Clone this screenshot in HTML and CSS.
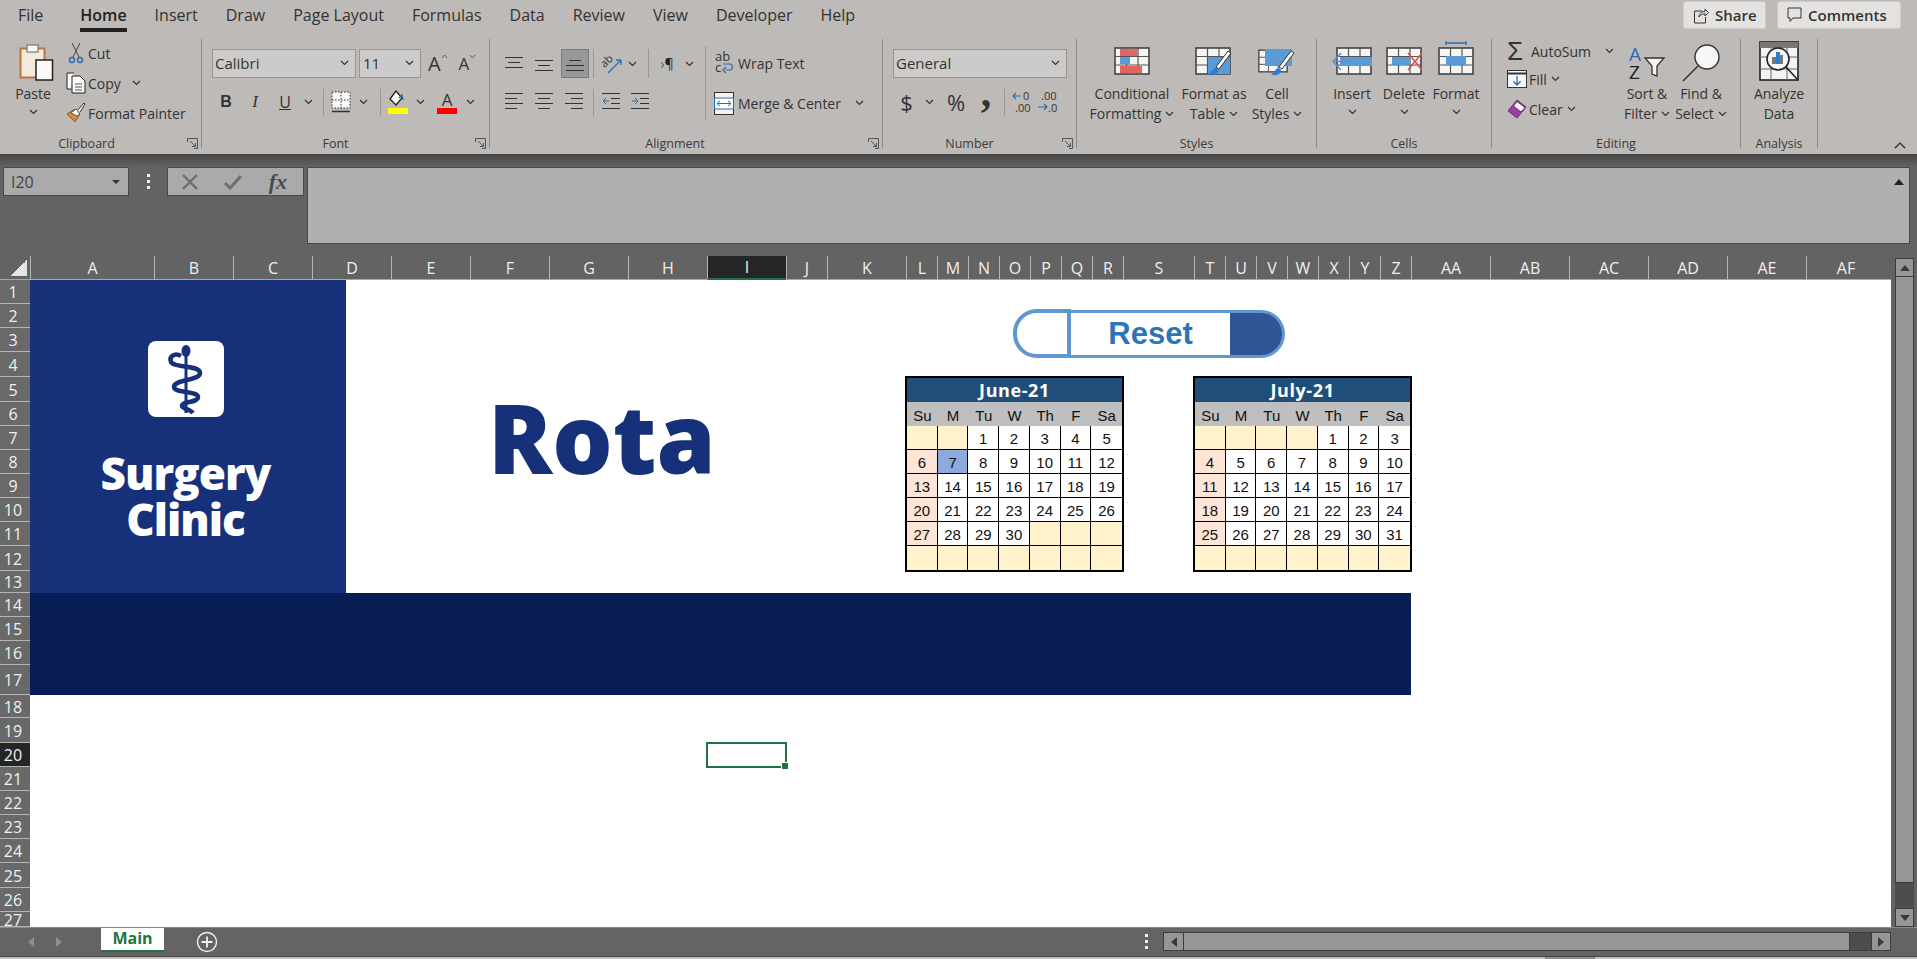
FILE: index.html
```html
<!DOCTYPE html>
<html lang="en">
<head>
  <meta charset="UTF-8">
  <title>Rota - Excel</title>
  <link rel="stylesheet" href="styles.css">
</head>
<body>
  <svg class="defs" aria-hidden="true">
    <symbol id="chev" viewBox="0 0 9 6"><path d="M1 1l3.5 3.5L8 1" fill="none" stroke="#333" stroke-width="1.2"/></symbol>
    <symbol id="launch" viewBox="0 0 11 11"><path d="M.5 4V.5H10.5V10.5H7M3 3l5.5 5.5M8.5 5v3.5H5" fill="none" stroke="#555"/></symbol>
    <symbol id="grid" viewBox="0 0 36 28">
      <rect x="1" y="1" width="34" height="26" fill="#f5f5f5" stroke="#444" stroke-width="1.6"/>
      <path d="M12.5 1v26M24 1v26M1 9.5h34M1 18h34" stroke="#555" stroke-width="1.2"/>
    </symbol>
  </svg>

  <header class="ribbon">
    <nav class="tabs">
      <span class="tab tab-file">File</span>
      <span class="tab tab-active">Home</span>
      <span class="tab">Insert</span>
      <span class="tab">Draw</span>
      <span class="tab">Page Layout</span>
      <span class="tab">Formulas</span>
      <span class="tab">Data</span>
      <span class="tab">Review</span>
      <span class="tab">View</span>
      <span class="tab">Developer</span>
      <span class="tab">Help</span>
      <button class="top-btn top-share">
        <svg width="16" height="17" viewBox="0 0 16 17"><path d="M9 4H1.5v12h11V10M6 10c0-4 3-5.500 6-5.500V2l3.500 3.500L12 9V6.800c-2.500 0-4.500 1-6 3.200z" fill="none" stroke="#333"/></svg>
        Share
      </button>
      <button class="top-btn top-comments">
        <svg width="15" height="16" viewBox="0 0 15 16"><path d="M1 1h13v10H6l-3 3.500V11H1z" fill="none" stroke="#333"/></svg>
        Comments
      </button>
    </nav>

    <div class="groups">
      <section class="group g-clipboard">
        <div class="group-body">
          <div class="big big-paste">
            <svg class="big-icon" width="35" height="38" viewBox="0 0 35 38">
              <rect x="1.500" y="5.500" width="24" height="29" fill="#f3e9dd" stroke="#b9763f" stroke-width="2"/>
              <rect x="8" y="2" width="11" height="7" fill="#f6f6f6" stroke="#666"/>
              <rect x="17" y="17" width="16.500" height="20" fill="#fafafa" stroke="#222" stroke-width="1.500"/>
            </svg>
            <span>Paste</span>
            <svg class="chev chev-big"><use href="#chev"/></svg>
          </div>
          <div class="small-col">
            <div class="tool">
              <svg class="tool-icon" width="20" height="22" viewBox="0 0 20 22"><path d="M6 1l7 14M14 1L7 15" stroke="#444" fill="none"/><circle cx="6" cy="18" r="2.500" fill="none" stroke="#2b6cb0" stroke-width="1.400"/><circle cx="14" cy="18" r="2.500" fill="none" stroke="#2b6cb0" stroke-width="1.400"/></svg>
              Cut
            </div>
            <div class="tool">
              <svg class="tool-icon" width="20" height="22" viewBox="0 0 20 22"><path d="M8 1H1v16h4" fill="#fafafa" stroke="#222"/><path d="M6 4h8l5 5v12H6z" fill="#fafafa" stroke="#222"/><path d="M9 12h7M9 15h7M9 18h7" stroke="#555"/></svg>
              Copy
              <svg class="chev chev-copy"><use href="#chev"/></svg>
            </div>
            <div class="tool">
              <svg class="tool-icon" width="20" height="22" viewBox="0 0 20 22"><path d="M1 12l8 8 5-8-5-5z" fill="#d98a3f" stroke="#8a5a2b"/><path d="M5 11l5-4 4 5-3 2z" fill="#fff" stroke="#555"/><path d="M12 8l6-7 1 1-5 8" fill="#fff" stroke="#333"/></svg>
              Format Painter
            </div>
          </div>
        </div>
        <div class="group-label">Clipboard<svg class="launch"><use href="#launch"/></svg></div>
      </section>

      <section class="group g-font">
        <div class="group-body rows">
          <div class="row">
            <div class="select select-font">Calibri<svg class="chev"><use href="#chev"/></svg></div>
            <div class="select select-size">11<svg class="chev"><use href="#chev"/></svg></div>
            <span class="grow grow-up">A<svg width="7" height="5" viewBox="0 0 7 5"><path d="M1 4l2.500-3L6 4" fill="none" stroke="#2b6cb0"/></svg></span>
            <span class="grow grow-down">A<svg width="7" height="5" viewBox="0 0 7 5"><path d="M1 1l2.500 3L6 1" fill="none" stroke="#2b6cb0"/></svg></span>
          </div>
          <div class="row">
            <span class="fmt w28 fmt-b">B</span>
            <span class="fmt w30 fmt-i">I</span>
            <span class="fmt w30 fmt-u">U</span>
            <span class="fmt w16"><svg class="chev"><use href="#chev"/></svg></span>
            <span class="sep w15"></span>
            <span class="fmt w20"><svg width="20" height="22" viewBox="0 0 20 22"><path d="M1 1h18v16H1zM10 1v16M1 9h18" fill="#fafafa" stroke="#333" stroke-dasharray="1.500 1.500"/><path d="M1 20.500h18" stroke="#333" stroke-width="1.500"/></svg></span>
            <span class="fmt w25"><svg class="chev"><use href="#chev"/></svg></span>
            <span class="sep w9"></span>
            <span class="fmt w26"><svg width="20" height="24" viewBox="0 0 20 24"><path d="M8 1l-6 8 6 6 6-7z" fill="#fafafa" stroke="#222" stroke-width="1.300"/><path d="M11 8l3-3 1 5" fill="none" stroke="#2b6cb0" stroke-width="1.300"/><rect y="18" width="20" height="6" fill="#ffff00"/></svg></span>
            <span class="fmt w18"><svg class="chev"><use href="#chev"/></svg></span>
            <span class="fmt w36 font-color">A<i class="color-bar"></i></span>
            <span class="fmt w10"><svg class="chev"><use href="#chev"/></svg></span>
          </div>
        </div>
        <div class="group-label group-label-font">Font<svg class="launch"><use href="#launch"/></svg></div>
      </section>

      <section class="group g-align">
        <div class="group-body align-body">
          <div class="rows align-left">
            <div class="row">
              <span class="fmt w30"><svg width="18" height="14" viewBox="0 0 18 14"><path d="M0 .5h18M3 5.500h12M0 10.500h18" stroke="#333"/></svg></span>
              <span class="fmt w30"><svg width="18" height="14" viewBox="0 0 18 14"><path d="M0 3.500h18M3 8.500h12M0 13.500h18" stroke="#333"/></svg></span>
              <span class="fmt fmt-on"><svg width="18" height="14" viewBox="0 0 18 14"><path d="M3 3.500h12M0 8.500h18M0 13.500h18" stroke="#333"/></svg></span>
              <span class="sep w8"></span>
              <span class="fmt w30"><svg width="21" height="20" viewBox="0 0 21 20"><text x="0" y="12" class="svg-num" transform="rotate(-45 4 10)">ab</text><path d="M6 19L19 6M19 6h-5M19 6v5" fill="none" stroke="#2b6cb0" stroke-width="1.300"/></svg></span>
              <span class="fmt w10"><svg class="chev"><use href="#chev"/></svg></span>
              <span class="sep w22"></span>
              <span class="fmt w16 rtl-mark"><b>&rsaquo;</b>&para;</span>
              <span class="fmt w28"><svg class="chev"><use href="#chev"/></svg></span>
            </div>
            <div class="row">
              <span class="fmt w30"><svg width="18" height="20" viewBox="0 0 18 20"><path d="M0 1.500h18M0 6.500h12M0 11.500h18M0 16.500h12" stroke="#333"/></svg></span>
              <span class="fmt w30"><svg width="18" height="20" viewBox="0 0 18 20"><path d="M0 1.500h18M3 6.500h12M0 11.500h18M3 16.500h12" stroke="#333"/></svg></span>
              <span class="fmt w30"><svg width="18" height="20" viewBox="0 0 18 20"><path d="M0 1.500h18M6 6.500h12M0 11.500h18M6 16.500h12" stroke="#333"/></svg></span>
              <span class="sep w8"></span>
              <span class="fmt w28"><svg width="18" height="20" viewBox="0 0 18 20"><path d="M0 1.500h18M9 6.500h9M9 11.500h9M0 16.500h18" stroke="#333"/><path d="M7 9H1M4 6L1 9l3 3" fill="none" stroke="#2b6cb0"/></svg></span>
              <span class="fmt w30"><svg width="18" height="20" viewBox="0 0 18 20"><path d="M0 1.500h18M9 6.500h9M9 11.500h9M0 16.500h18" stroke="#333"/><path d="M1 9h6M4 6l3 3-3 3" fill="none" stroke="#2b6cb0"/></svg></span>
            </div>
          </div>
          <span class="sep sep-tall"></span>
          <div class="align-right">
            <div class="tool tool-wrap">
              <svg width="19" height="24" viewBox="0 0 19 24"><text x="0" y="10" class="svg-txt">ab</text><text x="0" y="21" class="svg-txt">c</text><path d="M11 19h4c3 0 3-6 0-6H8M11 16l-3 3 3 3" fill="none" stroke="#2b6cb0" stroke-width="1.200"/></svg>
              Wrap Text
            </div>
            <div class="tool tool-merge">
              <svg width="20" height="23" viewBox="0 0 20 23"><rect x=".5" y=".5" width="19" height="22" fill="#f3f3f3" stroke="#333"/><rect x=".5" y="6" width="19" height="11" fill="#fff" stroke="#2b6cb0"/><path d="M3 11.500h14M6 9l-3 2.500L6 14M14 9l3 2.500L14 14" fill="none" stroke="#2b6cb0"/></svg>
              Merge &amp; Center
              <svg class="chev chev-merge"><use href="#chev"/></svg>
            </div>
          </div>
        </div>
        <div class="group-label group-label-align">Alignment<svg class="launch"><use href="#launch"/></svg></div>
      </section>

      <section class="group g-number">
        <div class="group-body rows">
          <div class="row">
            <div class="select select-general">General<svg class="chev"><use href="#chev"/></svg></div>
          </div>
          <div class="row">
            <span class="fmt w27 fmt-sym">$</span>
            <span class="fmt w18"><svg class="chev"><use href="#chev"/></svg></span>
            <span class="fmt w36 fmt-sym">%</span>
            <span class="fmt w24 fmt-comma">,</span>
            <span class="sep w12"></span>
            <span class="fmt w24"><svg width="20" height="22" viewBox="0 0 20 22"><text x="11" y="9" class="svg-num">0</text><text x="3" y="21" class="svg-num">.00</text><path d="M9 5H1M4 2L1 5l3 3" fill="none" stroke="#2b6cb0" stroke-width="1.200"/></svg></span>
            <span class="fmt w28"><svg width="20" height="22" viewBox="0 0 20 22"><text x="3" y="9" class="svg-num">.00</text><text x="10" y="21" class="svg-num">.0</text><path d="M0 16h9M6 13l3 3-3 3" fill="none" stroke="#2b6cb0" stroke-width="1.200"/></svg></span>
          </div>
        </div>
        <div class="group-label group-label-font">Number<svg class="launch"><use href="#launch"/></svg></div>
      </section>

      <section class="group g-styles">
        <div class="group-body">
          <div class="big w92">
            <svg class="big-icon" width="36" height="28"><use href="#grid"/><rect x="6" y="2" width="17" height="7" fill="#e06666"/><rect x="6" y="10" width="10" height="7" fill="#5b9bd5"/><rect x="6" y="19" width="22" height="7" fill="#e06666"/></svg>
            <span>Conditional</span>
            <span>Formatting<svg class="chev chev-in"><use href="#chev"/></svg></span>
          </div>
          <div class="big w68">
            <svg class="big-icon" width="38" height="31" viewBox="0 0 38 31"><use href="#grid" width="36" height="28"/><rect x="13" y="10" width="22" height="17" fill="#5b9bd5"/><path d="M36 6L24 22l-3-2L33 4z" fill="#fff" stroke="#333"/><path d="M21 21c-3 0-4 4-8 6 5 3 10 0 10-4z" fill="#2b7cd3"/></svg>
            <span>Format as</span>
            <span>Table<svg class="chev chev-in"><use href="#chev"/></svg></span>
          </div>
          <div class="big w58">
            <svg class="big-icon" width="38" height="31" viewBox="0 0 38 31"><use href="#grid" width="30" height="28"/><rect x="7" y="2" width="27" height="17" fill="#5b9bd5"/><path d="M36 6L24 22l-3-2L33 4z" fill="#fff" stroke="#333"/><path d="M21 21c-3 0-4 4-8 6 5 3 10 0 10-4z" fill="#2b7cd3"/></svg>
            <span>Cell</span>
            <span>Styles<svg class="chev chev-in"><use href="#chev"/></svg></span>
          </div>
        </div>
        <div class="group-label">Styles</div>
      </section>

      <section class="group g-cells">
        <div class="group-body">
          <div class="big w54">
            <svg class="big-icon" width="40" height="28" viewBox="0 0 40 28"><use href="#grid" x="4" width="36" height="28"/><rect x="8" y="10" width="32" height="9" fill="#5b9bd5"/><path d="M17 14.500H2M9 6l-8 8.500L9 23" fill="none" stroke="#5b8fd0" stroke-width="1.600"/></svg>
            <span>Insert</span>
            <svg class="chev chev-big"><use href="#chev"/></svg>
          </div>
          <div class="big w50">
            <svg class="big-icon" width="36" height="28"><use href="#grid"/><rect x="6" y="10" width="18" height="8" fill="#5b9bd5"/><path d="M22 6l14 17M36 6L22 23" stroke="#d9534f" stroke-width="1.600"/></svg>
            <span>Delete</span>
            <svg class="chev chev-big"><use href="#chev"/></svg>
          </div>
          <div class="big w54">
            <svg class="big-icon icon-tall" width="36" height="34" viewBox="0 0 36 34"><use href="#grid" y="6" width="36" height="28"/><rect x="8" y="15" width="20" height="9" fill="#5b9bd5"/><path d="M8 2h20M8 0v4M28 0v4" stroke="#2b6cb0" stroke-width="1.300"/></svg>
            <span>Format</span>
            <svg class="chev chev-big"><use href="#chev"/></svg>
          </div>
        </div>
        <div class="group-label">Cells</div>
      </section>

      <section class="group g-editing">
        <div class="group-body">
          <div class="small-col edit-col">
            <div class="tool tool-sum"><span class="sigma">&Sigma;</span>AutoSum<svg class="chev chev-sum"><use href="#chev"/></svg></div>
            <div class="tool tool-edit">
              <svg class="tool-icon" width="20" height="18" viewBox="0 0 20 18"><rect x=".5" y=".5" width="19" height="17" fill="#f6f6f6" stroke="#333"/><path d="M.5 3.500h19" stroke="#333" stroke-width="2"/><path d="M10 6v9M6.500 11.500L10 15l3.500-3.500" fill="none" stroke="#2b6cb0" stroke-width="1.300"/></svg>
              Fill<svg class="chev chev-in"><use href="#chev"/></svg>
            </div>
            <div class="tool tool-edit">
              <svg class="tool-icon" width="20" height="20" viewBox="0 0 20 20"><path d="M1 12L10 1l9 7-9 11z" fill="#9c3fa0" stroke="#6d2a71"/><path d="M6.500 7L10 2.500l8 6L14 13z" fill="#fafafa" stroke="#6d2a71"/></svg>
              Clear<svg class="chev chev-in"><use href="#chev"/></svg>
            </div>
          </div>
          <div class="big w54">
            <svg class="big-icon icon-sort" width="38" height="36" viewBox="0 0 38 36"><text x="1" y="17" class="svg-az svg-az-a">A</text><text x="1" y="35" class="svg-az">Z</text><path d="M17 14h19l-7 8v10l-5-2v-8z" fill="#f4f4f4" stroke="#333" stroke-width="1.300"/></svg>
            <span>Sort &amp;</span>
            <span>Filter<svg class="chev chev-in"><use href="#chev"/></svg></span>
          </div>
          <div class="big w54">
            <svg class="big-icon icon-sort" width="38" height="38" viewBox="0 0 38 38"><circle cx="25" cy="13" r="12" fill="#f7f7f7" stroke="#333" stroke-width="1.400"/><path d="M16 22L1 37" stroke="#333" stroke-width="1.400"/></svg>
            <span>Find &amp;</span>
            <span>Select<svg class="chev chev-in"><use href="#chev"/></svg></span>
          </div>
        </div>
        <div class="group-label group-label-edit">Editing</div>
      </section>

      <section class="group g-analysis">
        <div class="group-body">
          <div class="big big-analyze">
            <svg class="big-icon icon-tall" width="41" height="40" viewBox="0 0 41 40">
              <rect x="1" y="1" width="38" height="38" fill="#f3f3f3" stroke="#222" stroke-width="1.600"/>
              <rect x="1" y="1" width="38" height="6" fill="#777"/>
              <path d="M1 16h38M1 28h38M12 7v32M28 7v32" stroke="#666"/>
              <circle cx="19" cy="18" r="11" fill="#f7f7f7" stroke="#222" stroke-width="1.600"/>
              <path d="M27 26l12 13" stroke="#222" stroke-width="1.600"/>
              <rect x="13" y="16" width="4" height="7" fill="#777"/><rect x="17" y="11" width="4" height="12" fill="#2b7cd3"/><rect x="21" y="14" width="3" height="9" fill="#777"/>
            </svg>
            <span>Analyze</span>
            <span>Data</span>
          </div>
        </div>
        <div class="group-label">Analysis</div>
      </section>
    </div>
    <svg class="collapse" width="12" height="7" viewBox="0 0 12 7"><path d="M1 6l5-5 5 5" fill="none" stroke="#222" stroke-width="1.200"/></svg>
  </header>

  <div class="formula-bar">
    <div class="name-box">I20<i class="caret-down"></i></div>
    <div class="dots"><i></i><i></i><i></i></div>
    <div class="fx-box">
      <svg width="16" height="16" viewBox="0 0 16 16"><path d="M1 1l14 14M15 1L1 15" stroke="#6e6e6e" stroke-width="2.400"/></svg>
      <svg width="18" height="16" viewBox="0 0 18 16"><path d="M1 9l5 5L17 2" fill="none" stroke="#6e6e6e" stroke-width="3"/></svg>
      <span class="fx">fx</span>
    </div>
    <div class="formula-input"><svg width="10" height="7" viewBox="0 0 10 7"><path d="M0 7l5-6 5 6z" fill="#222"/></svg></div>
  </div>

  <main class="workspace">
    <div class="sheet">
      <div class="corner"><i></i></div>
      <div class="col-h">A</div><div class="col-h">B</div><div class="col-h">C</div><div class="col-h">D</div><div class="col-h">E</div><div class="col-h">F</div><div class="col-h">G</div><div class="col-h">H</div><div class="col-h col-active">I</div><div class="col-h">J</div><div class="col-h">K</div><div class="col-h">L</div><div class="col-h">M</div><div class="col-h">N</div><div class="col-h">O</div><div class="col-h">P</div><div class="col-h">Q</div><div class="col-h">R</div><div class="col-h">S</div><div class="col-h">T</div><div class="col-h">U</div><div class="col-h">V</div><div class="col-h">W</div><div class="col-h">X</div><div class="col-h">Y</div><div class="col-h">Z</div><div class="col-h">AA</div><div class="col-h">AB</div><div class="col-h">AC</div><div class="col-h">AD</div><div class="col-h">AE</div><div class="col-h">AF</div><div class="col-h col-end"></div>

      <div class="row-h">1</div><div class="row-h">2</div><div class="row-h">3</div><div class="row-h">4</div><div class="row-h">5</div><div class="row-h">6</div><div class="row-h">7</div><div class="row-h">8</div><div class="row-h">9</div><div class="row-h">10</div><div class="row-h">11</div><div class="row-h">12</div><div class="row-h">13</div><div class="row-h">14</div><div class="row-h">15</div><div class="row-h">16</div><div class="row-h">17</div><div class="row-h">18</div><div class="row-h">19</div><div class="row-h row-active">20</div><div class="row-h">21</div><div class="row-h">22</div><div class="row-h">23</div><div class="row-h">24</div><div class="row-h">25</div><div class="row-h">26</div><div class="row-h">27</div>

      <div class="logo-block">
        <svg class="logo-mark" width="76" height="76" viewBox="0 0 76 76">
          <rect width="76" height="76" rx="8" fill="#fff"/>
          <path d="M38 14v58" stroke="#16317a" stroke-width="3"/>
          <ellipse cx="38" cy="10" rx="4.500" ry="6" fill="#16317a"/>
          <path d="M33 15C26 11 21 16 23 21 26 27 52 24 52 32 52 40 26 38 26 46 26 52 50 50 50 56 50 62 34 60 34 65 34 68 42 68 45 72" fill="none" stroke="#16317a" stroke-width="4.500"/>
        </svg>
        <div class="logo-text">Surgery<br>Clinic</div>
      </div>

      <h1 class="rota-title">Rota</h1>

      <div class="reset-btn">
        <span class="reset-left"></span>
        <span class="reset-mid">Reset</span>
        <span class="reset-right"></span>
      </div>

      <table class="cal cal-june">
        <tr><th colspan="7" class="cal-title">June-21</th></tr>
        <tr class="cal-days"><td>Su</td><td>M</td><td>Tu</td><td>W</td><td>Th</td><td>F</td><td>Sa</td></tr>
        <tr><td class="blank"></td><td class="blank"></td><td>1</td><td>2</td><td>3</td><td>4</td><td>5</td></tr>
        <tr><td class="sun">6</td><td class="today">7</td><td>8</td><td>9</td><td>10</td><td>11</td><td>12</td></tr>
        <tr><td class="sun">13</td><td>14</td><td>15</td><td>16</td><td>17</td><td>18</td><td>19</td></tr>
        <tr><td class="sun">20</td><td>21</td><td>22</td><td>23</td><td>24</td><td>25</td><td>26</td></tr>
        <tr><td class="sun">27</td><td>28</td><td>29</td><td>30</td><td class="blank"></td><td class="blank"></td><td class="blank"></td></tr>
        <tr><td class="blank"></td><td class="blank"></td><td class="blank"></td><td class="blank"></td><td class="blank"></td><td class="blank"></td><td class="blank"></td></tr>
      </table>

      <table class="cal cal-july">
        <tr><th colspan="7" class="cal-title">July-21</th></tr>
        <tr class="cal-days"><td>Su</td><td>M</td><td>Tu</td><td>W</td><td>Th</td><td>F</td><td>Sa</td></tr>
        <tr><td class="blank"></td><td class="blank"></td><td class="blank"></td><td class="blank"></td><td>1</td><td>2</td><td>3</td></tr>
        <tr><td class="sun">4</td><td>5</td><td>6</td><td>7</td><td>8</td><td>9</td><td>10</td></tr>
        <tr><td class="sun">11</td><td>12</td><td>13</td><td>14</td><td>15</td><td>16</td><td>17</td></tr>
        <tr><td class="sun">18</td><td>19</td><td>20</td><td>21</td><td>22</td><td>23</td><td>24</td></tr>
        <tr><td class="sun">25</td><td>26</td><td>27</td><td>28</td><td>29</td><td>30</td><td>31</td></tr>
        <tr><td class="blank"></td><td class="blank"></td><td class="blank"></td><td class="blank"></td><td class="blank"></td><td class="blank"></td><td class="blank"></td></tr>
      </table>

      <div class="band"></div>
      <div class="selected-cell"></div>
    </div>

    <aside class="vscroll">
      <div class="sb-btn sb-up"><i class="tri-up"></i></div>
      <div class="sb-thumb"></div>
      <div class="sb-track"></div>
      <div class="sb-btn sb-down"><i class="tri-down"></i></div>
    </aside>
  </main>

  <footer class="tabbar">
    <i class="tri-left tab-prev"></i>
    <i class="tri-right tab-next"></i>
    <div class="sheet-tab">Main</div>
    <svg class="add-sheet" width="22" height="22" viewBox="0 0 22 22"><circle cx="11" cy="11" r="9.500" fill="none" stroke="#f2f2f2" stroke-width="1.400"/><path d="M11 5.500v11M5.500 11h11" stroke="#f2f2f2" stroke-width="1.800"/></svg>
    <div class="dots dots-tab"><i></i><i></i><i></i></div>
    <div class="hscroll">
      <div class="hs-btn"><i class="tri-left"></i></div>
      <div class="hs-thumb"></div>
      <div class="hs-track"></div>
      <div class="hs-btn hs-btn-right"><i class="tri-right"></i></div>
    </div>
  </footer>
  <div class="statusbar"><i></i></div>
</body>
</html>
```

FILE: styles.css
```css
* {
  box-sizing: border-box;
  margin: 0;
  padding: 0;
}
html, body {
  width: 1917px;
  height: 959px;
  overflow: hidden;
}
body {
  font-family: 'Open Sans', 'Noto Sans', sans-serif;
  font-size: 14px;
  color: #333;
  background: #636363;
  display: flex;
  flex-direction: column;
}
i {
  display: block;
}
.defs {
  position: absolute;
  width: 0;
  height: 0;
}

/* Ribbon */
.ribbon {
  position: relative;
  height: 154px;
  flex: none;
  background: #bebab7;
}
.tabs {
  height: 39px;
  display: flex;
  align-items: flex-start;
  gap: 28px;
  padding-left: 18px;
  font-size: 16px;
}
.tab {
  height: 32px;
  line-height: 30px;
  white-space: nowrap;
}
.tab-file {
  margin-right: 9px;
}
.tab-active {
  font-weight: 600;
  color: #222;
  border-bottom: 4px solid #222;
}
.top-btn {
  height: 28px;
  margin-top: 1px;
  display: flex;
  align-items: center;
  gap: 6px;
  font: 600 15px 'Open Sans', sans-serif;
  color: #333;
  background: #e4e2e0;
  border: 1px solid #cfccc9;
  border-radius: 3px;
  padding-left: 9px;
}
.top-share {
  margin-left: auto;
  width: 83px;
  margin-right: -17px;
}
.top-comments {
  width: 124px;
  margin-right: 16px;
}
.groups {
  display: flex;
}
.group {
  height: 109px;
  border-right: 1px solid #8e8b88;
  display: flex;
  flex-direction: column;
  flex: none;
}
.group-body {
  height: 97px;
  flex: none;
  display: flex;
}
.group-label {
  position: relative;
  height: 12px;
  line-height: 16px;
  font-size: 12.5px;
  text-align: center;
  color: #3a3a3a;
}
.launch {
  position: absolute;
  right: 3px;
  top: 2px;
  width: 11px;
  height: 11px;
}
.g-clipboard { width: 202px; }
.g-clipboard .group-label { padding-right: 28px; }
.g-font { width: 288px; }
.g-font .group-body { padding-left: 10px; }
.group-label-font { padding-right: 20px; }
.g-align { width: 393px; }
.group-label-align { padding-right: 22px; }
.g-number { width: 194px; }
.g-number .group-body { padding-left: 10px; }
.g-styles { width: 240px; }
.g-styles .group-body { padding-left: 9px; }
.g-cells { width: 175px; }
.g-cells .group-body { padding-left: 8px; }
.g-editing { width: 249px; }
.g-analysis { width: 77px; }

/* big buttons: icon on top, two lines of label underneath */
.big {
  height: 85px;
  display: grid;
  grid-template-rows: 45px 20px 20px;
  justify-items: center;
  line-height: 20px;
  white-space: nowrap;
  flex: none;
}
.big-icon {
  margin-top: 8px;
}
.icon-tall {
  margin-top: 2px;
}
.icon-sort {
  margin-top: 5px;
}
.big-paste { width: 66px; }
.big-paste .big-icon {
  margin: 4px 0 0 6px;
}
.big-analyze { width: 76px; }
.w92 { width: 92px; margin-right: 2px; }
.w68 { width: 68px; }
.w58 { width: 58px; }
.w54 { width: 54px; }
.w50 { width: 50px; }
.chev {
  width: 9px;
  height: 6px;
  flex: none;
}
.chev-big {
  align-self: center;
  margin-bottom: 4px;
}
.chev-in {
  margin-left: 4px;
  vertical-align: 2px;
}

/* small icon + label rows */
.small-col {
  display: flex;
  flex-direction: column;
  width: 136px;
  margin-top: -1px;
}
.tool {
  height: 30px;
  display: flex;
  align-items: center;
  white-space: nowrap;
}
.tool-icon {
  width: 20px;
  margin-right: 2px;
  flex: none;
}
.chev-copy { margin-left: 11px; }

.rows {
  display: flex;
  flex-direction: column;
  gap: 12px;
  padding-top: 10px;
}
.row {
  display: flex;
  align-items: center;
}
.row + .row {
  height: 24px;
}
.select {
  height: 29px;
  display: flex;
  align-items: center;
  justify-content: space-between;
  padding: 0 6px 2px 2px;
  background: #cdcbc9;
  border: 1px solid #979593;
  font-size: 15px;
  flex: none;
}
.select-font { width: 144px; margin-right: 3px; }
.select-size { width: 62px; margin-right: 7px; padding-left: 3px; }
.select-general { width: 174px; }
.grow {
  display: flex;
  font-size: 20px;
  line-height: 24px;
  width: 32px;
  color: #333;
}
.grow svg { margin-top: 2px; }
.grow-down {
  font-size: 17px;
}
.fmt {
  height: 24px;
  display: flex;
  align-items: center;
  justify-content: center;
  flex: none;
}
.fmt-on {
  width: 28px;
  height: 29px;
  margin-left: 2px;
  background: #989898;
  border: 1px solid #7a7a7a;
}
.fmt-b { font-weight: 700; font-size: 16px; font-family: 'Liberation Sans', sans-serif; }
.fmt-i { font-style: italic; font-size: 17px; font-family: 'Liberation Serif', serif; }
.fmt-u { text-decoration: underline; font-size: 16px; }
.fmt-sym { font-size: 22px; }
.fmt-comma { font: 700 42px/24px 'Liberation Serif', serif; padding-bottom: 20px; }
.font-color {
  flex-direction: column;
  font-size: 17px;
  line-height: 17px;
}
.color-bar {
  width: 20px;
  height: 6px;
  background: #f00;
}
.rtl-mark { font-size: 14px; color: #222; }
.rtl-mark b { color: #2b6cb0; font-weight: 400; }
.w8 { width: 8px; }
.w9 { width: 9px; }
.w10 { width: 10px; }
.w12 { width: 12px; }
.w15 { width: 15px; }
.w16 { width: 16px; }
.w18 { width: 18px; }
.w20 { width: 20px; }
.w22 { width: 22px; }
.w24 { width: 24px; }
.w25 { width: 25px; }
.w26 { width: 26px; }
.w27 { width: 27px; }
.w28 { width: 28px; }
.w30 { width: 30px; }
.w36 { width: 36px; }
.sep {
  height: 29px;
  flex: none;
}
.sep::before {
  content: "";
  display: block;
  width: 1px;
  height: 100%;
  margin: 0 auto;
  background: #9a9794;
}
.row + .row .sep {
  height: 27px;
}
.align-body { padding-left: 9px; }
.align-left { width: 206px; }
.sep-tall {
  height: 74px;
  width: 1px;
  margin-top: 7px;
  background: #9a9794;
}
.sep-tall::before { display: none; }
.align-right {
  padding-top: 9px;
  padding-left: 9px;
}
.tool-wrap { height: 30px; gap: 4px; }
.tool-merge { height: 30px; margin-top: 10px; gap: 4px; margin-left: -1px; }
.chev-merge { margin-left: 10px; }
.svg-txt {
  font: 13px 'Open Sans', sans-serif;
  fill: #333;
}
.svg-num {
  font: 11px 'Open Sans', sans-serif;
  fill: #333;
}
.svg-az {
  font: 19px 'Open Sans', sans-serif;
  fill: #222;
}
.svg-az-a { fill: #2b6cb0; }
.edit-col {
  width: 113px;
  margin-left: 15px;
}
.edit-col .tool:first-child { height: 26px; }
.sigma {
  width: 24px;
  font: 26px 'Liberation Sans', sans-serif;
  flex: none;
}
.chev-sum { margin-left: 14px; }
.collapse {
  position: absolute;
  right: 11px;
  bottom: 5px;
}

/* Formula bar */
.formula-bar {
  height: 102px;
  flex: none;
  display: flex;
  align-items: flex-start;
  padding-top: 13px;
  background: linear-gradient(#464646, #636363 13px);
}
.name-box {
  width: 126px;
  height: 29px;
  margin-left: 3px;
  padding: 0 8px 0 7px;
  font-size: 16px;
  color: #444;
  background: #aaa;
  border: 1px solid #484848;
  display: flex;
  justify-content: space-between;
  align-items: center;
}
.caret-down {
  border: 4px solid transparent;
  border-top: 4px solid #333;
  border-bottom: 0;
}
.dots {
  display: flex;
  flex-direction: column;
  gap: 3px;
  width: 38px;
  height: 29px;
  justify-content: center;
  align-items: center;
}
.dots i {
  width: 3px;
  height: 3px;
  background: #f0f0f0;
}
.fx-box {
  width: 137px;
  height: 29px;
  background: #aaa;
  border: 1px solid #484848;
  display: flex;
  align-items: center;
  justify-content: space-between;
  padding: 0 16px 0 14px;
  margin-right: 3px;
}
.fx {
  font: italic 700 22px 'Liberation Serif', serif;
  color: #4a4a4a;
}
.formula-input {
  width: 1603px;
  height: 77px;
  background: #b0b0b0;
  border: 1px solid #484848;
  display: flex;
  justify-content: flex-end;
  padding: 10px 5px 0 0;
}

/* Sheet */
.workspace {
  height: 671px;
  flex: none;
  display: flex;
}
.sheet {
  width: 1891px;
  display: grid;
  grid-template-columns: 30px 124px repeat(8, 79px) 41px 79px repeat(7, 31px) 71px repeat(7, 31px) repeat(6, 79px) 6px;
  grid-template-rows: 24px 24px 24px 24px 25px 25px 24px 24px 24px 24px 24px 24px 25px 22px 24px 24px 24px 30px 23px 25px 24px 24px 24px 24px 24px 25px 24px 15px;
  background: #fff;
  overflow: hidden;
}
.corner {
  background: #636363;
  border-bottom: 1px solid #a8a8a8;
  padding: 4px 0 0 11px;
}
.corner i {
  width: 16px;
  height: 16px;
  background: linear-gradient(135deg, transparent 50%, #e4e4e4 50%);
}
.col-h,
.row-h {
  background: #636363;
  color: #f0f0f0;
  font-size: 16px;
  display: flex;
  align-items: center;
  justify-content: center;
  overflow: hidden;
}
.col-h {
  border-left: 1px solid #b4b4b4;
  border-bottom: 1px solid #a8a8a8;
}
.col-end {
  border-left: 0;
}
.col-active {
  background: #262626;
  border-bottom: 2px solid #217346;
}
.row-h {
  grid-column: 1;
  background: #696969;
  border-bottom: 1px solid #b4b4b4;
  padding: 1px 4px 0 0;
}
.row-active {
  background: #262626;
}

.logo-block {
  grid-column: 2 / 6;
  grid-row: 2 / 15;
  width: 316px;
  background: #16317a;
  display: flex;
  flex-direction: column;
  align-items: center;
  padding: 61px 5px 0 0;
}
.logo-text {
  margin-top: 33px;
  color: #fff;
  font: 800 44px/46px 'Open Sans', sans-serif;
  letter-spacing: -1px;
  text-align: center;
}
.rota-title {
  grid-column: 7 / 11;
  grid-row: 2 / 15;
  padding: 92px 0 0 18px;
  color: #16317a;
  font: 800 95px/130px 'Open Sans', sans-serif;
}
.reset-btn {
  grid-column: 13 / 27;
  grid-row: 3 / 6;
  margin: 6px 0 0 107px;
  width: 272px;
  height: 48px;
  display: flex;
}
.reset-left {
  width: 58px;
  height: 49px;
  margin-top: -1px;
  border: 4px solid #6097cf;
  border-radius: 24px 0 0 24px;
}
.reset-mid {
  flex: 1;
  border: solid #6097cf;
  border-width: 3px 0;
  color: #2e75b6;
  font: 700 31px/42px 'Liberation Sans', sans-serif;
  text-align: center;
}
.reset-right {
  width: 55px;
  background: #2f5597;
  border: 3px solid #6097cf;
  border-left: 0;
  border-radius: 0 24px 24px 0;
}

/* Mini calendars */
.cal {
  grid-row: 6 / 15;
  align-self: start;
  margin: -1px 0 0 -1px;
  width: 219px;
  height: 196px;
  border: 2px solid #000;
  border-collapse: separate;
  border-spacing: 0;
  table-layout: fixed;
  font: 15px 'Liberation Sans', sans-serif;
  color: #111;
  text-align: center;
}
.cal-june { grid-column: 13 / 20; }
.cal-july { grid-column: 21 / 28; }
.cal tr {
  height: 24px;
}
.cal td {
  padding: 2px 0 0;
  height: 24px;
  border-right: 1px solid #000;
  border-bottom: 1px solid #000;
}
.cal td:last-child {
  border-right: 0;
}
.cal tr:last-child td {
  border-bottom: 0;
}
.cal-title {
  background: #1f4e79;
  color: #fff;
  font: 700 18px 'Open Sans', sans-serif;
  letter-spacing: .6px;
}
.cal .cal-days td {
  background: #bfbfbf;
  border: 0;
}
.blank { background: #fff2cc; }
.sun { background: #fce4d6; }
.today { background: #8ea9db; }

.band {
  grid-column: 2 / 28;
  grid-row: 15 / 19;
  background: #071d54;
}
.selected-cell {
  position: relative;
  grid-column: 10;
  grid-row: 21;
  margin: -1px;
  border: 2px solid #217346;
}
.selected-cell::after {
  content: "";
  position: absolute;
  right: -4px;
  bottom: -4px;
  width: 6px;
  height: 6px;
  background: #217346;
  border: 1px solid #fff;
}

/* Scrollbars */
.vscroll {
  width: 26px;
  background: #636363;
  padding: 2px 3px 0 4px;
  display: flex;
  flex-direction: column;
}
.sb-btn {
  height: 19px;
  flex: none;
  background: #969696;
  border: 1px solid #3c3c3c;
  display: flex;
  align-items: center;
  justify-content: center;
}
.sb-thumb {
  height: 606px;
  background: #969696;
  border: 1px solid #3c3c3c;
  border-top: 0;
}
.sb-track {
  flex: 1;
  background: #4d4d4d;
}
.tri-up {
  border: 5px solid transparent;
  border-top: 0;
  border-bottom: 6px solid #3a3a3a;
}
.tri-down {
  border: 5px solid transparent;
  border-bottom: 0;
  border-top: 6px solid #3a3a3a;
}
.tri-left {
  border: 5px solid transparent;
  border-left: 0;
  border-right: 6px solid #3a3a3a;
}
.tri-right {
  border: 5px solid transparent;
  border-right: 0;
  border-left: 6px solid #3a3a3a;
}

/* Sheet tabs */
.tabbar {
  height: 29px;
  flex: none;
  display: flex;
  align-items: flex-start;
  background: #646464;
  border-top: 1px solid #8a8a8a;
}
.tab-prev {
  margin: 9px 0 0 28px;
  border-right-color: #8e8e8e;
}
.tab-next {
  margin: 9px 0 0 22px;
  border-left-color: #8e8e8e;
}
.sheet-tab {
  width: 63px;
  height: 24px;
  margin-left: 39px;
  text-align: center;
  background: #fff;
  border-bottom: 2px solid #217346;
  color: #217346;
  font: 700 16px/21px 'Open Sans', sans-serif;
}
.add-sheet {
  margin: 3px 0 0 32px;
}
.dots-tab {
  margin: 1px 0 0 925px;
  width: 6px;
  height: 25px;
}
.hscroll {
  width: 728px;
  height: 19px;
  margin: 4px 0 0 14px;
  display: flex;
  background: #4d4d4d;
  border: 1px solid #3c3c3c;
}
.hs-btn {
  width: 19px;
  flex: none;
  background: #969696;
  display: flex;
  align-items: center;
  justify-content: center;
}
.hs-btn-right {
  border-left: 1px solid #3c3c3c;
}
.hs-thumb {
  width: 667px;
  background: #969696;
  border-left: 1px solid #3c3c3c;
  border-right: 1px solid #3c3c3c;
}
.hs-track {
  flex: 1;
}
.statusbar {
  flex: 1;
  background: #c4c1be;
  border-top: 1px solid #444;
}
.statusbar i {
  width: 50px;
  height: 3px;
  margin-left: 1545px;
  background: #8f8c89;
}
```
